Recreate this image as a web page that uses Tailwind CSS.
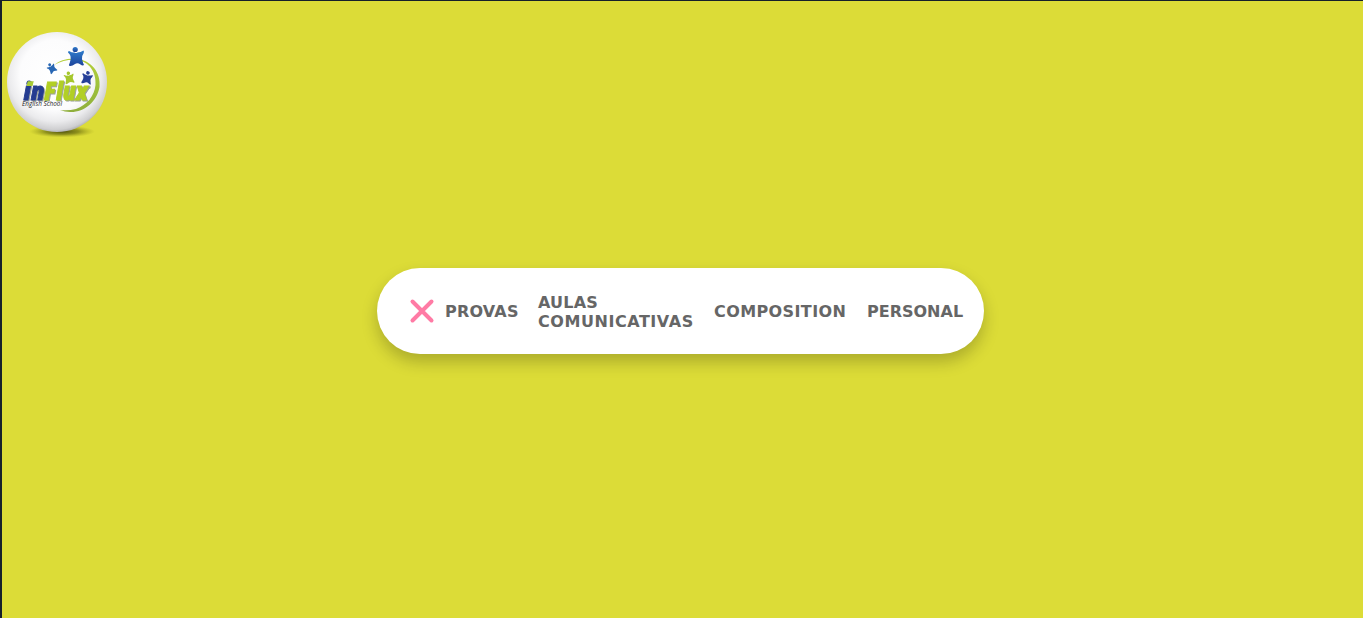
<!DOCTYPE html>
<html lang="pt-BR">
<head>
<meta charset="utf-8">
<title>inFlux English School</title>
<script src="https://cdn.jsdelivr.net/npm/@tailwindcss/browser@4"></script>
</head>
<body class="relative h-[618px] overflow-hidden border-t border-l-2 border-t-[#16202a] border-l-[#16202a] bg-[#dcdc37]">
<header class="absolute top-[23px] -left-0.5">
<svg class="h-[120px] w-[120px]" viewBox="0 0 120 120" role="img" aria-label="inFlux English School">
  <defs>
    <radialGradient id="ball" cx=".48" cy=".43" r=".58"><stop offset="0" stop-color="#fff"/><stop offset=".6" stop-color="#fcfcfd"/><stop offset=".8" stop-color="#ebebed"/><stop offset=".94" stop-color="#cfcfd1"/><stop offset="1" stop-color="#aaaaac"/></radialGradient>
    <radialGradient id="shade"><stop offset="0" stop-color="#46480c" stop-opacity=".95"/><stop offset=".5" stop-color="#65680e" stop-opacity=".65"/><stop offset="1" stop-color="#99991a" stop-opacity="0"/></radialGradient>
    <linearGradient id="ring" x1="0" y1="0" x2="0" y2="1"><stop offset="0" stop-color="#b6cf3b"/><stop offset=".5" stop-color="#9fc23c"/><stop offset="1" stop-color="#8fae3c"/></linearGradient>
    <linearGradient id="blue" x1="0" y1="0" x2="0" y2="1"><stop offset="0" stop-color="#2f7ccb"/><stop offset="1" stop-color="#1c439b"/></linearGradient>
    <path id="kid" d="M-7-5Q-3.500-3-1.500-3.500Q0-2.500 1.500-3.500Q4.500-3.500 7.500-5.500Q8.500-4.500 7.500-2.500Q5.500 0 6 3Q7 7 8 9Q6.500 10 4.500 8.500Q1.500 6.500-1 8Q-4 10.500-6.500 10Q-7.500 9-6 6Q-4.800 3-5.500 0Q-6-2-8-3.500Q-8-5-7-5Z"/>
  </defs>
  <ellipse cx="62" cy="107.500" rx="33" ry="6" fill="url(#shade)"/>
  <circle cx="57" cy="58" r="50" fill="url(#ball)"/>
  <path d="M54 41Q62 34 75 34.500C92 36 101 49 99.500 63C97 78 84 88.500 70 88Q65 88 60 86Q68 87 76 85C87 81 94.500 72 95.500 61C96.500 48 89 37.500 77 36Q65 35 54 41Z" fill="url(#ring)"/>
  <g fill="url(#blue)"><use href="#kid" x="76" y="32"/><circle cx="75.200" cy="25.500" r="2.600"/></g>
  <g transform="translate(51.500 44) rotate(-30) scale(.52)" fill="#2967b4"><use href="#kid"/><circle cy="-7" r="2.800"/></g>
  <g transform="translate(69 53.500) rotate(-8) scale(.62)" fill="#a6c72d"><use href="#kid"/><circle cy="-7" r="2.800"/></g>
  <g transform="translate(87 53.500) rotate(12) scale(.66)" fill="#253f98"><use href="#kid"/><circle cy="-7" r="2.800"/></g>
  <g class="drop-shadow-[1px_1px_0.5px_rgba(90,100,90,0.6)]" font-family="'Open Sans', sans-serif" font-size="24" font-weight="800" font-style="italic" stroke-width="1">
    <text x="23.500" y="76.300" textLength="21" lengthAdjust="spacingAndGlyphs" fill="#253c91" stroke="#253c91">in</text>
    <text x="44" y="76.300" textLength="43.500" lengthAdjust="spacingAndGlyphs" fill="#b2cf25" stroke="#b2cf25">Flux</text>
  </g>
  <path d="M27.800 57.300H33.800L32.400 62H26.400Z" fill="#a8cb35"/>
  <circle cx="89.500" cy="63.500" r="1" fill="none" stroke="#8fa768" stroke-width=".5"/>
  <text x="22" y="82" textLength="40" lengthAdjust="spacingAndGlyphs" font-family="'Open Sans', sans-serif" font-size="6.500" font-style="italic" fill="#222">English School</text>
</svg>
</header>
<nav class="mt-[267px] ml-[375px] flex h-[86px] w-[607px] items-center rounded-full bg-white pr-5 pl-8 font-['Verdana','DejaVu_Sans',sans-serif] text-[16px] leading-[19px] font-bold text-[#666] shadow-[0_8px_16px_rgba(0,0,0,0.22)]">
  <svg class="mr-2.5 h-[26px] w-[26px] shrink-0" viewBox="0 0 26 26" fill="none" stroke="#ff7ba5" stroke-width="4" stroke-linecap="round"><path d="M3.500 3.500L22.500 22.500M22.500 3.500L3.500 22.500"/></svg>
  <a class="w-[74px] shrink-0 whitespace-nowrap tracking-[0.2px]">PROVAS</a>
  <a class="ml-[19px] w-[156px] shrink-0 pt-0.5 whitespace-nowrap"><span class="tracking-[0.2px]">AULAS</span><br><span class="tracking-[0.55px]">COMUNICATIVAS</span></a>
  <a class="ml-5 w-[133px] shrink-0 whitespace-nowrap tracking-[0.4px]">COMPOSITION</a>
  <a class="ml-5 shrink-0">PERSONAL</a>
</nav>
</body>
</html>
